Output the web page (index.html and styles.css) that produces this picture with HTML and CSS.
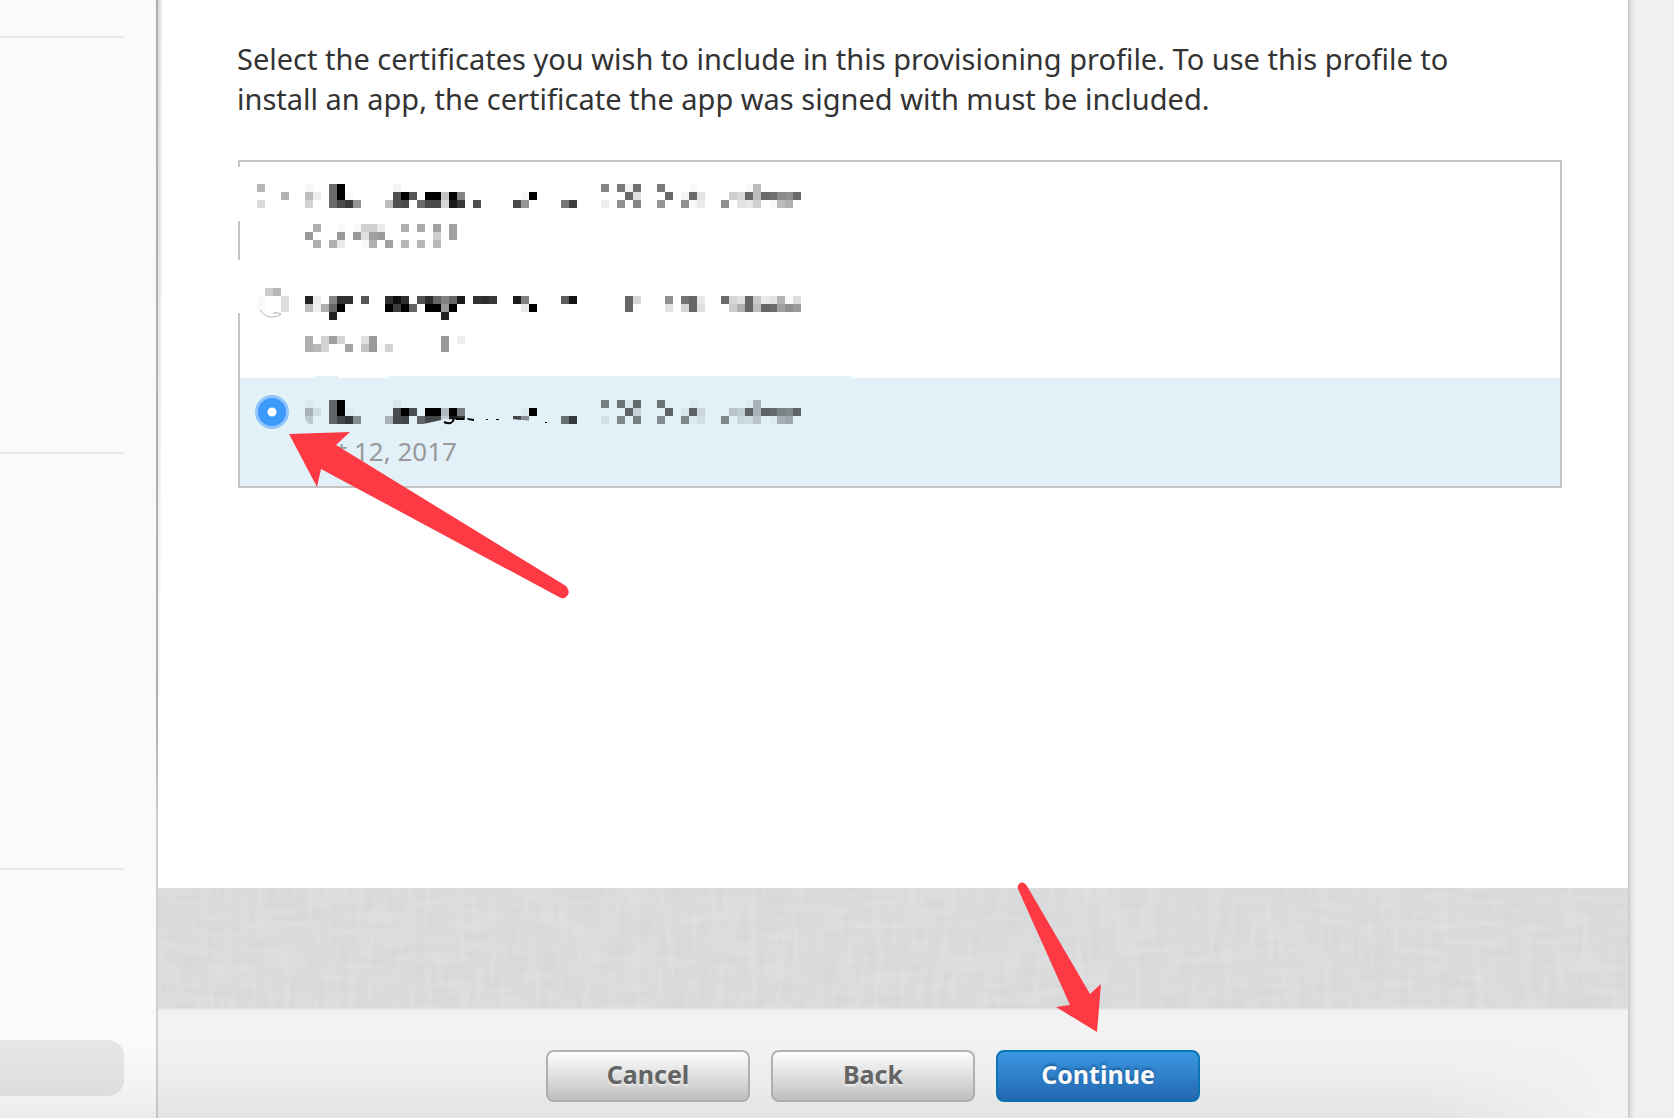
FILE: index.html
```html
<!DOCTYPE html>
<html lang="en">
<head>
    <meta charset="UTF-8">
    <meta name="viewport" content="width=device-width, initial-scale=1.0">
    <title>Select Certificates</title>
    <link rel="stylesheet" href="styles.css">
</head>
<body>
    <div class="page">
        <aside class="sidebar">
            <div class="sidebar-group"></div>
            <div class="sidebar-group"></div>
            <div class="sidebar-group"></div>
            <div class="sidebar-selected"></div>
        </aside>

        <form class="main">
            <section class="content">
                <p class="intro">Select the certificates you wish to include in this provisioning profile. To use this profile to install an app, the certificate the app was signed with must be included.</p>

                <div class="cert-list">
                    <div class="cert">
                        <svg class="mosaic-radio" data-mosaic="radio1" viewBox="-2 -4 50 32"></svg>
                        <div>
                            <svg class="mosaic" data-mosaic="name1" viewBox="0 -4 504 32"></svg>
                            <svg class="mosaic" data-mosaic="date1" viewBox="0 -4 504 32"></svg>
                        </div>
                    </div>
                    <div class="cert before-selected">
                        <svg class="mosaic-radio" data-mosaic="radio2" viewBox="-2 0 50 32">
                            <path d="M3 22Q8 29 15 29Q21 29 24 26Q21 24 16 25" fill="none" stroke="#b5b5b5"/>
                        </svg>
                        <div>
                            <svg class="mosaic" data-mosaic="name2" viewBox="0 -8 504 32"></svg>
                            <svg class="mosaic" data-mosaic="date2" viewBox="0 -8 504 32"></svg>
                        </div>
                    </div>
                    <div class="cert selected">
                        <input type="radio" id="cert3" name="certificate" checked>
                        <label for="cert3">
                            <svg class="mosaic" data-mosaic="name1" viewBox="0 -4 504 32">
                                <path d="M118 26V24L141 19L165 20V16H182V26Z M0 24V19L4 24Z M206 19L240 22V26H206Z" fill="#e2f1f8"/>
                                <path d="M139 22Q145 25 148 21L149 18" fill="none" stroke="#000" stroke-width="2"/>
                                <path d="M151 18h8v2h-8z M162 18l7 1v2l-6-1z M181 19h2v1h-2z M191 19h3v1h-3z M240 22h2v1h-2z"/>
                            </svg>
                            <span class="date">Oct 12, 2017</span>
                        </label>
                    </div>
                </div>
            </section>

            <div class="linen">
                <svg width="100%" height="100%">
                    <filter id="weaveX" x="0" y="0" width="100%" height="100%">
                        <feTurbulence type="fractalNoise" baseFrequency="0.02 0.12" numOctaves="2" seed="4"/>
                        <feColorMatrix values="0 0 0 0 1  0 0 0 0 1  0 0 0 0 1  0.8 0 0 0 -0.3"/>
                    </filter>
                    <filter id="weaveY" x="0" y="0" width="100%" height="100%">
                        <feTurbulence type="fractalNoise" baseFrequency="0.12 0.02" numOctaves="2" seed="9"/>
                        <feColorMatrix values="0 0 0 0 1  0 0 0 0 1  0 0 0 0 1  0.8 0 0 0 -0.3"/>
                    </filter>
                    <rect width="100%" height="100%" filter="url(#weaveX)"/>
                    <rect width="100%" height="100%" filter="url(#weaveY)"/>
                </svg>
            </div>

            <footer class="actions">
                <button type="button">Cancel</button>
                <button type="button">Back</button>
                <button type="submit" class="primary">Continue</button>
            </footer>
        </form>

        <div class="gutter"></div>
        <div class="fade"></div>

        <!-- Pointers over the selected certificate and the Continue button -->
        <svg class="arrow arrow-cert" viewBox="0 0 282 168">
            <path d="M0 2L61 0L47 13L277 154Q282 160 278 164Q275 168 270 165L32 37L28 55Z"/>
        </svg>
        <svg class="arrow arrow-continue" viewBox="0 0 84 150">
            <path d="M79 150L38 125L52 123L0 7Q-1 3 2 1Q6 -1 9 4L72 112L83 102Z"/>
        </svg>
    </div>

    <script src="script.js"></script>
</body>
</html>
```
FILE: styles.css
```css
* {
    box-sizing: border-box;
}
body {
    margin: 0;
    font-family: "Noto Sans", "Open Sans", sans-serif;
    color: #333;
    background-color: #f0f0f0;
}
.page {
    position: relative;
    display: flex;
    min-height: 100vh;
    overflow: hidden;
}
.sidebar {
    width: 158px;
    padding: 36px 34px 22px 0;
    display: flex;
    flex-direction: column;
    background: linear-gradient(#b0b0b0 64%, #d0d0d0 74%) no-repeat right / 2px 100% #f9fbfa;
}
.sidebar-group {
    height: 416px;
    border-top: 2px solid #e6e8e7;
}
.sidebar-group:nth-child(3) {
    height: auto;
    flex: 1;
}
.sidebar-selected {
    height: 56px;
    background-color: #e6e6e6;
    border-radius: 0 16px 16px 0;
}
.main {
    flex: 1;
    display: flex;
    flex-direction: column;
    background-color: #fff;
}
.content {
    flex: 1;
    padding: 39px 66px 0 79px;
    background: radial-gradient(ellipse 5px 90% at 0 0, #d4d4d4, #f4f4f4 75%, #fff) no-repeat;
}
.intro {
    margin: 0 0 41px;
    padding-right: 60px;
    font-size: 29px;
    line-height: 40px;
}
.cert-list {
    margin-left: 1px;
    padding-left: 2px;
    border: 2px solid #c4c4c4;
    border-left: none;
    background: linear-gradient(#c4c4c4 5px, transparent 5px 59px, #c4c4c4 59px 98px, transparent 98px 151px, #c4c4c4 151px) no-repeat 0 0 / 2px 100%;
}
.cert {
    display: grid;
    grid-template-columns: 50px 1fr;
    align-items: start;
    height: 108px;
    padding: 18px 15px 0;
}
.cert.selected {
    padding-top: 17px;
    background-color: #e2f1f8;
}
/* The highlight spills a little over the row above */
.cert.before-selected {
    background: linear-gradient(90deg, transparent 75px, #e2f1f8 75px 98px, transparent 98px 148px, #e2f1f8 148px 612px, transparent 612px) no-repeat bottom / 100% 2px;
}
.mosaic {
    display: block;
    width: 504px;
    height: 32px;
    margin-bottom: 8px;
}
.selected .mosaic {
    margin-top: 1px;
}
.mosaic-radio {
    display: block;
    width: 50px;
    height: 32px;
}
.cert input {
    appearance: none;
    width: 34px;
    height: 34px;
    margin: 0;
    border: 3px solid #8fc5fa;
    border-radius: 50%;
    background: radial-gradient(circle, #fff 4px, #3b99fc 5px);
}
.date {
    display: block;
    font-size: 26px;
    line-height: 30px;
    color: #999;
}
.linen {
    height: 122px;
    background-color: #d6d8da;
    border-bottom: 2px solid #e4e4e4;
}
.linen svg {
    display: block;
    opacity: 0.4;
}
.actions {
    display: flex;
    justify-content: center;
    gap: 21px;
    padding: 40px 40px 16px 0;
    background-color: #f2f2f2;
}
button {
    width: 204px;
    height: 52px;
    padding: 0 0 4px;
    font-family: inherit;
    font-size: 25px;
    font-weight: bold;
    color: #666;
    text-shadow: 0 2px 2px #f4f4f4;
    background: linear-gradient(#fff, #c8c8c8);
    border: 2px solid #b4b4b4;
    border-radius: 8px;
    cursor: pointer;
}
button.primary {
    color: #fff;
    text-shadow: 0 -2px 3px #1a5f9e;
    background: linear-gradient(#3b99e3, #266cb8);
    border-color: #0a78b8;
}
.gutter {
    width: 46px;
    background: linear-gradient(90deg, #c8c8c8, #e0e0e0 3px, #f0f0f0 7px);
}
/* Soft shade along the bottom edge of the window */
.fade {
    position: absolute;
    left: 0;
    right: 0;
    bottom: 0;
    height: 80px;
    pointer-events: none;
    background: linear-gradient(transparent, rgba(0, 0, 0, 0.02) 50%, rgba(0, 0, 0, 0.06));
    -webkit-mask-image: linear-gradient(90deg, #000 85%, transparent 96%);
    mask-image: linear-gradient(90deg, #000 85%, transparent 96%);
}
.arrow {
    position: absolute;
    fill: #fd3944;
    pointer-events: none;
}
.arrow-cert {
    left: 289px;
    top: 432px;
    width: 282px;
    height: 168px;
}
.arrow-continue {
    left: 1018px;
    top: 882px;
    width: 84px;
    height: 150px;
    overflow: visible;
}
```
FILE: script.js
```js
// Pixelated text: each string is a line of 8px cells, "column:grey level"
const MOSAICS = {
    radio1: ['0:b5', '3:b3', '0:d9'],
    name1: [
        '0:f8 3:6b 4:00 11:f3 37:85 39:7a 40:f3 41:70 44:7a 48:fa 55:fa 56:bd',
        '0:bd 1:eb 3:6b 4:00 5:fa 11:4f 12:00 13:55 15:00 16:00 17:c4 18:00 19:85 27:f8 28:00 40:69 41:de 45:69 47:f3 48:69 49:e3 53:d0 54:d9 55:69 56:bd 57:69 58:70 59:8a 60:8f 61:69',
        '0:d3 3:6b 4:4a 5:3a 6:95 10:bd 11:4f 12:4a 14:6b 15:4a 16:4a 17:d9 18:1c 19:3a 21:4f 26:4a 27:95 32:77 33:3d 37:ee 39:8f 41:85 44:95 47:8f 48:f8 49:eb 52:8f 54:e3 55:e8 56:d0 58:fa 59:bb 60:b0'
    ],
    date1: [
        '1:b0 4:fa 6:fa 7:d0 8:d0 9:eb 12:b0 14:aa 16:a0 18:a0',
        '0:9a 4:9a 6:9a 7:e0 8:a0 9:9a 16:d0 18:a0',
        '1:b0 3:b0 4:e8 7:fa 8:b0 10:a0 12:b5 14:b5 16:b8'
    ],
    radio2: ['1:cc 2:b8', '0:fa 3:dd', '0:fa 3:dd'],
    name2: [
        '0:22 1:eb 3:85 4:30 5:30 7:58 10:30 11:0d 12:2e 14:52 15:2e 16:66 17:80 18:66 19:1a 21:33 22:2e 23:38 26:1a 27:80 32:5c 33:14 40:66 41:d6 45:8f 47:74 48:66 49:e8 52:6b 53:d6 54:e0 55:66 56:c8 57:eb 58:e3 59:b3 60:fa 61:dd',
        '0:bf 1:f0 2:b0 3:66 4:00 5:fa 10:00 11:3d 12:00 13:66 15:00 16:00 17:99 18:00 27:e8 28:00 40:66 45:e3 47:d6 48:66 49:e0 53:cc 54:b0 55:66 56:bd 57:66 58:6b 59:a0 60:8f 61:99',
        '3:22 17:22'
    ],
    date2: [
        '0:b0 2:d3 3:a0 4:d3 7:e0 8:99 17:99 19:ee',
        '0:b0 1:b8 2:d3 5:a3 7:c4 8:99 9:fa 10:d3 17:99'
    ]
};

document.querySelectorAll('[data-mosaic]').forEach(function(svg) {
    const cells = document.createElementNS('http://www.w3.org/2000/svg', 'g');
    MOSAICS[svg.dataset.mosaic].forEach(function(line, row) {
        line.split(' ').forEach(function(cell) {
            const [col, grey] = cell.split(':');
            const rect = document.createElementNS('http://www.w3.org/2000/svg', 'rect');
            rect.setAttribute('x', col * 8);
            rect.setAttribute('y', row * 8);
            rect.setAttribute('width', 8);
            rect.setAttribute('height', 8);
            rect.setAttribute('fill-opacity', 1 - parseInt(grey, 16) / 255);
            cells.appendChild(rect);
        });
    });
    svg.prepend(cells);
});
```
